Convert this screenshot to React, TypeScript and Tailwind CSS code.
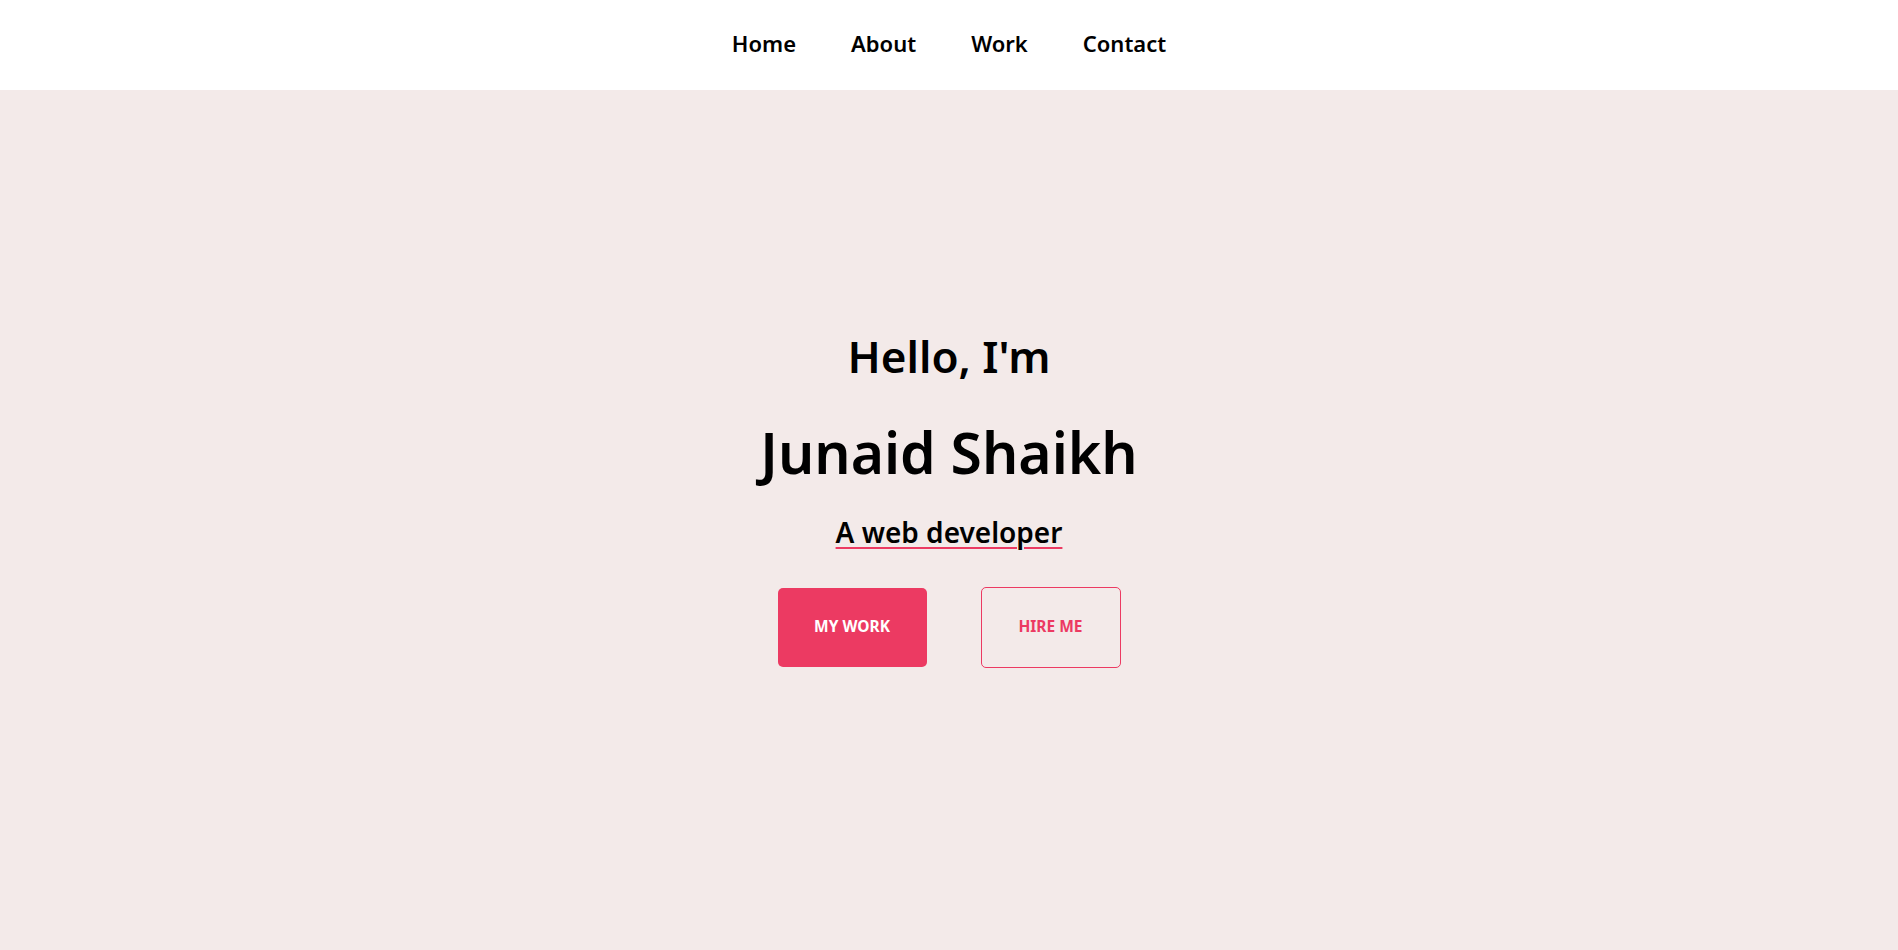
import React from "react";

const links = ["Home", "About", "Work", "Contact"];

export default function App() {
  return (
    <div className="min-h-[950px] flex flex-col bg-[#f3eae9] font-['Noto_Sans',sans-serif] text-black">
      <header className="h-[90px] pb-[4px] bg-white flex items-center justify-center">
        <nav className="flex items-center gap-[55px]">
          {links.map((l) => (
            <a key={l} href="#" className="text-[22px] font-semibold leading-none">
              {l}
            </a>
          ))}
        </nav>
      </header>

      <section className="flex-1 flex flex-col items-center pt-[244px]">
        <h2 className="text-[44px] font-semibold leading-none">Hello, I'm</h2>
        <h1 className="mt-[46px] text-[57px] font-semibold leading-none">Junaid Shaikh</h1>
        <p className="mt-[37px] text-[28px] font-semibold leading-none underline decoration-[#ec3a62] decoration-[1.5px] underline-offset-[4px]">
          A web developer
        </p>
        <div className="mt-[41px] flex items-center gap-[54px]">
          <button className="w-[149px] h-[79px] pb-[2px] rounded-[5px] bg-[#ec3a62] text-white text-[15.5px] font-bold">
            MY WORK
          </button>
          <button className="w-[140px] h-[81px] pb-[2px] rounded-[5px] border border-[#ec3a62] text-[#ec3a62] text-[15.5px] font-bold">
            HIRE ME
          </button>
        </div>
      </section>
    </div>
  );
}
